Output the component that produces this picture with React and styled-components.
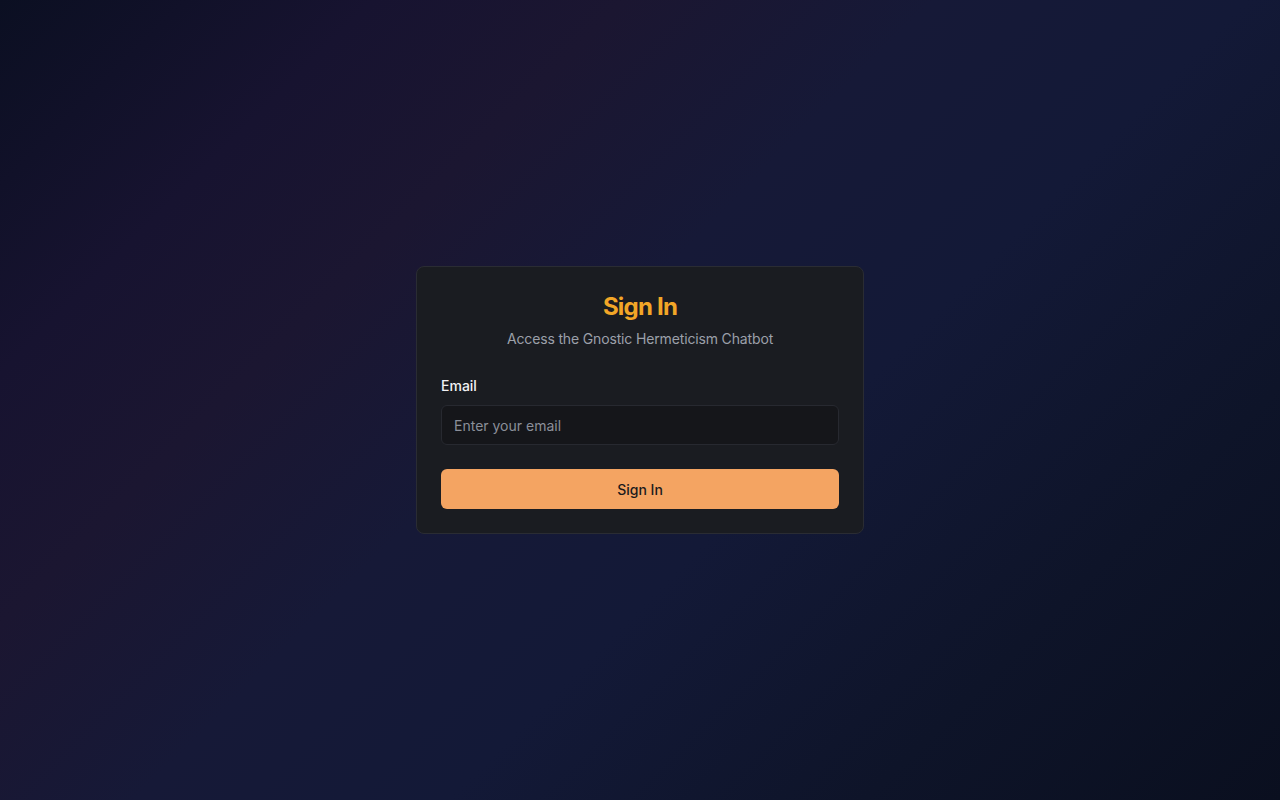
import styled, { createGlobalStyle } from "styled-components";

const GlobalStyle = createGlobalStyle`
  * { box-sizing: border-box; }
  html, body { margin: 0; padding: 0; }
  body {
    font-family: Inter, "Noto Sans", sans-serif;
    -webkit-font-smoothing: antialiased;
  }
`;

const Page = styled.main`
  min-height: 100vh;
  width: 100%;
  display: flex;
  align-items: center;
  justify-content: center;
  background: linear-gradient(
    135deg,
    #0b0f22 0%,
    #171330 18%,
    #1b1631 30%,
    #161937 45%,
    #131937 60%,
    #0e1429 80%,
    #0a0f1f 100%
  );
`;

const Card = styled.div`
  width: 448px;
  background: #1a1c21;
  border: 1px solid #2a2c33;
  border-radius: 8px;
  padding: 24px;
  display: flex;
  flex-direction: column;
`;

const Header = styled.div`
  display: flex;
  flex-direction: column;
  align-items: center;
  gap: 6px;
`;

const Title = styled.h1`
  margin: 0;
  font-size: 24px;
  line-height: 32px;
  font-weight: 700;
  color: #f2a627;
  letter-spacing: -0.8px;
`;

const Subtitle = styled.p`
  margin: 0;
  font-size: 14px;
  line-height: 20px;
  color: #9ca0aa;
  letter-spacing: -0.15px;
`;

const Form = styled.form`
  display: flex;
  flex-direction: column;
  margin-top: 30px;
`;

const Field = styled.div`
  display: flex;
  flex-direction: column;
  gap: 12px;
`;

const Label = styled.label`
  font-size: 14px;
  line-height: 14px;
  font-weight: 500;
  color: #f1f2f4;
`;

const Input = styled.input`
  height: 40px;
  width: 100%;
  padding: 0 12px;
  background: #15161a;
  border: 1px solid #272930;
  border-radius: 6px;
  font-family: inherit;
  font-size: 14px;
  color: #e5e7eb;
  outline: none;
  &::placeholder {
    color: #8b8f99;
  }
`;

const Button = styled.button`
  margin-top: 24px;
  height: 40px;
  width: 100%;
  border: none;
  border-radius: 6px;
  background: #f4a462;
  color: #1b1a1d;
  font-family: inherit;
  font-size: 14px;
  font-weight: 500;
  cursor: pointer;
`;

const App = () => {
  return (
    <>
      <GlobalStyle />
      <Page>
        <Card>
          <Header>
            <Title>Sign In</Title>
            <Subtitle>Access the Gnostic Hermeticism Chatbot</Subtitle>
          </Header>
          <Form onSubmit={(e) => e.preventDefault()}>
            <Field>
              <Label htmlFor="email">Email</Label>
              <Input id="email" type="email" placeholder="Enter your email" />
            </Field>
            <Button type="submit">Sign In</Button>
          </Form>
        </Card>
      </Page>
    </>
  );
};

export default App;
